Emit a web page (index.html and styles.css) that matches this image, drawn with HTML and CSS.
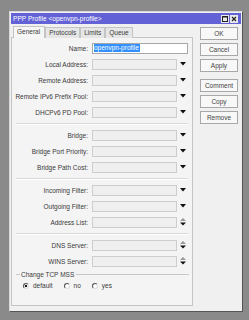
FILE: index.html
```html
<!DOCTYPE html>
<html lang="en">
<head>
    <meta charset="UTF-8">
    <title>PPP Profile</title>
    <link rel="stylesheet" href="styles.css">
</head>
<body>
    <div class="window">
        <div class="titlebar">
            <span class="title">PPP Profile &lt;openvpn-profile&gt;</span>
            <span class="win-btn"><svg width="8" height="8" viewBox="0 0 8 8"><rect x="1.5" y="1.5" width="5" height="5" fill="none" stroke="#222" stroke-width="1"/><line x1="1.5" y1="2" x2="6.5" y2="2" stroke="#222" stroke-width="1"/></svg></span>
            <span class="win-btn"><svg width="8" height="8" viewBox="0 0 8 8"><path d="M2 2 L6 6 M6 2 L2 6" stroke="#222" stroke-width="1.2"/></svg></span>
        </div>
        <div class="content">
            <div class="main">
                <ul class="tabs">
                    <li class="tab active">General</li>
                    <li class="tab">Protocols</li>
                    <li class="tab">Limits</li>
                    <li class="tab">Queue</li>
                </ul>
                <div class="panel">
                    <div class="row">
                        <label>Name:</label>
                        <div class="field name-field"><span class="selected">openvpn-profile</span></div>
                    </div>
                    <div class="row">
                        <label>Local Address:</label>
                        <div class="field"></div>
                        <span class="arrow"><svg width="6" height="4" viewBox="0 0 6 4"><polygon points="0,0 6,0 3,3.5" fill="#111"/></svg></span>
                    </div>
                    <div class="row">
                        <label>Remote Address:</label>
                        <div class="field"></div>
                        <span class="arrow"><svg width="6" height="4" viewBox="0 0 6 4"><polygon points="0,0 6,0 3,3.5" fill="#111"/></svg></span>
                    </div>
                    <div class="row">
                        <label>Remote IPv6 Prefix Pool:</label>
                        <div class="field"></div>
                        <span class="arrow"><svg width="6" height="4" viewBox="0 0 6 4"><polygon points="0,0 6,0 3,3.5" fill="#111"/></svg></span>
                    </div>
                    <div class="row">
                        <label>DHCPv6 PD Pool:</label>
                        <div class="field"></div>
                        <span class="arrow"><svg width="6" height="4" viewBox="0 0 6 4"><polygon points="0,0 6,0 3,3.5" fill="#111"/></svg></span>
                    </div>

                    <div class="separator"></div>

                    <div class="row">
                        <label>Bridge:</label>
                        <div class="field"></div>
                        <span class="arrow"><svg width="6" height="4" viewBox="0 0 6 4"><polygon points="0,0 6,0 3,3.5" fill="#111"/></svg></span>
                    </div>
                    <div class="row">
                        <label>Bridge Port Priority:</label>
                        <div class="field"></div>
                        <span class="arrow"><svg width="6" height="4" viewBox="0 0 6 4"><polygon points="0,0 6,0 3,3.5" fill="#111"/></svg></span>
                    </div>
                    <div class="row">
                        <label>Bridge Path Cost:</label>
                        <div class="field"></div>
                        <span class="arrow"><svg width="6" height="4" viewBox="0 0 6 4"><polygon points="0,0 6,0 3,3.5" fill="#111"/></svg></span>
                    </div>

                    <div class="separator"></div>

                    <div class="row">
                        <label>Incoming Filter:</label>
                        <div class="field"></div>
                        <span class="arrow"><svg width="6" height="4" viewBox="0 0 6 4"><polygon points="0,0 6,0 3,3.5" fill="#111"/></svg></span>
                    </div>
                    <div class="row">
                        <label>Outgoing Filter:</label>
                        <div class="field"></div>
                        <span class="arrow"><svg width="6" height="4" viewBox="0 0 6 4"><polygon points="0,0 6,0 3,3.5" fill="#111"/></svg></span>
                    </div>
                    <div class="row">
                        <label>Address List:</label>
                        <div class="field"></div>
                        <span class="arrow"><svg width="6" height="8" viewBox="0 0 6 8"><polygon points="3,0 6,3 0,3" fill="#999"/><polygon points="0,4.5 6,4.5 3,7.5" fill="#111"/></svg></span>
                    </div>

                    <div class="separator"></div>

                    <div class="row">
                        <label>DNS Server:</label>
                        <div class="field"></div>
                        <span class="arrow"><svg width="6" height="8" viewBox="0 0 6 8"><polygon points="3,0 6,3 0,3" fill="#999"/><polygon points="0,4.5 6,4.5 3,7.5" fill="#111"/></svg></span>
                    </div>
                    <div class="row">
                        <label>WINS Server:</label>
                        <div class="field"></div>
                        <span class="arrow"><svg width="6" height="8" viewBox="0 0 6 8"><polygon points="3,0 6,3 0,3" fill="#999"/><polygon points="0,4.5 6,4.5 3,7.5" fill="#111"/></svg></span>
                    </div>

                    <div class="group">
                        <div class="group-head">
                            <span class="group-line short"></span>
                            <span class="group-title">Change TCP MSS</span>
                            <span class="group-line"></span>
                        </div>
                        <div class="radios">
                            <span class="radio checked"></span><span class="radio-label">default</span>
                            <span class="radio"></span><span class="radio-label">no</span>
                            <span class="radio"></span><span class="radio-label">yes</span>
                        </div>
                    </div>
                </div>
            </div>
            <div class="buttons">
                <div class="btn">OK</div>
                <div class="btn">Cancel</div>
                <div class="btn">Apply</div>
                <div class="btn gap">Comment</div>
                <div class="btn">Copy</div>
                <div class="btn">Remove</div>
            </div>
        </div>
    </div>
</body>
</html>
```

FILE: styles.css
```css
body {
    margin: 0;
    padding: 0;
    background-color: #8a8a8a;
    font-family: 'Liberation Sans', Arial, sans-serif;
    font-size: 6.5px;
    color: #3a3a3a;
}

.window {
    margin: 11px 0 0 9px;
    width: 234px;
    height: 301px;
    box-sizing: border-box;
    background-color: #f0f0f0;
    border: 1px solid #d8d8d8;
    border-right-color: #555;
    border-bottom-color: #555;
    padding: 1px;
}

.titlebar {
    display: flex;
    align-items: center;
    height: 11px;
    background-color: #6262d6;
    color: #fff;
    padding: 0 3px 0 2px;
}

.title {
    flex: 1;
    font-size: 6.6px;
}

.win-btn {
    display: flex;
    width: 8px;
    height: 8px;
    margin-left: 1px;
    background-color: #e8e8e8;
}

.content {
    display: flex;
}

.main {
    width: 182px;
    margin-top: 2px;
}

.tabs {
    list-style: none;
    display: flex;
    margin: 0 0 0 2px;
    padding: 0;
    height: 11px;
}

.tab {
    box-sizing: border-box;
    height: 11px;
    padding: 0 3px;
    line-height: 10px;
    border: 1px solid #c4c4c4;
    border-bottom: none;
    background-color: #e6e6e6;
    margin-top: 1px;
}

.tab.active {
    background-color: #f6f6f6;
    margin-top: 0;
    height: 12px;
    position: relative;
    z-index: 1;
    padding: 0 4px 0 3px;
}

.panel {
    box-sizing: border-box;
    height: 269px;
    border: 1px solid #c4c4c4;
    background-color: #f4f4f4;
    padding-top: 2px;
}

.row {
    display: flex;
    align-items: center;
    height: 16px;
}

.row label {
    width: 76px;
    text-align: right;
    margin-right: 4px;
}

.field {
    box-sizing: border-box;
    width: 85px;
    height: 11px;
    border: 1px solid #cdcdcd;
    background-color: #efefef;
}

.name-field {
    width: 96px;
    background-color: #fff;
    border-color: #a8a8a8;
    display: flex;
    align-items: center;
    padding-left: 1px;
}

.selected {
    background-color: #3390ff;
    color: #fff;
    line-height: 8px;
    padding: 0 1px 0 0;
}

.arrow {
    width: 12px;
    display: flex;
    justify-content: center;
    align-items: center;
}

.separator {
    height: 1px;
    margin: 3px 4px 2px 4px;
    background-color: #dadada;
    border-bottom: 1px solid #fff;
}

.group {
    margin-top: 1px;
}

.group-head {
    display: flex;
    align-items: center;
    height: 9px;
}

.group-line {
    flex: 1;
    height: 1px;
    background-color: #c8c8c8;
    margin-right: 3px;
}

.group-line.short {
    flex: none;
    width: 4px;
    margin: 0 1px 0 4px;
}

.group-title {
    margin-right: 2px;
}

.radios {
    display: flex;
    align-items: center;
    height: 13px;
    padding-left: 11px;
}

.radio {
    box-sizing: border-box;
    width: 6px;
    height: 6px;
    border-radius: 50%;
    border: 1px solid #555;
    border-right-color: #ddd;
    border-bottom-color: #ddd;
    background-color: #fff;
    margin-right: 4px;
}

.radio.checked {
    background: radial-gradient(circle, #111 0 1.2px, #fff 1.6px);
}

.radio-label {
    margin-right: 11px;
}

.buttons {
    display: flex;
    flex-direction: column;
    margin: 3px 0 0 7px;
    width: 38px;
}

.btn {
    box-sizing: border-box;
    height: 13px;
    margin-bottom: 3px;
    border: 1px solid #a8a8a8;
    background-color: #f8f8f8;
    text-align: center;
    line-height: 11px;
    color: #444;
}

.btn.gap {
    margin-top: 4px;
}
```
